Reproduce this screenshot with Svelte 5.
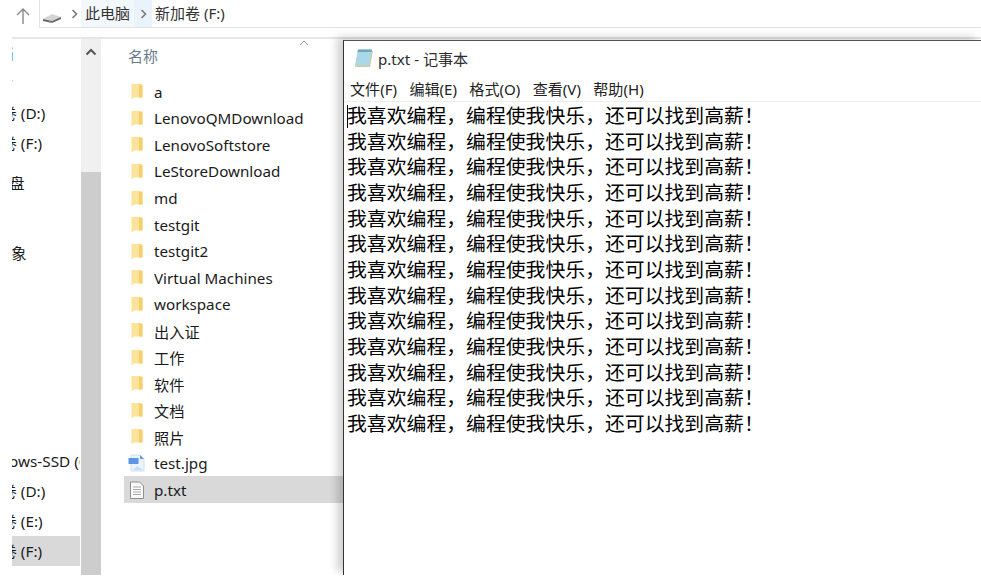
<script>
  const nav = [
    { t: '文档', x: -29, cls: 'r0' },
    { t: '图片', x: -29, cls: 'r0' },
    { t: '新加卷 (D:)', x: -41, cls: 'r0' },
    { t: '新加卷 (F:)', x: -41, cls: 'r0' },
    { t: 'U盘', x: -14, cls: 'r1' },
    { t: '3D 对象', x: -40, cls: 'r2' },
    { t: 'Windows-SSD (C:)', x: -40, cls: 'r3' },
    { t: '新加卷 (D:)', x: -41, cls: 'r0' },
    { t: '新加卷 (E:)', x: -41, cls: 'r0' },
    { t: '新加卷 (F:)', x: -41, cls: 'r0 sel' }
  ];
  const folders = ['a','LenovoQMDownload','LenovoSoftstore','LeStoreDownload','md','testgit','testgit2','Virtual Machines','workspace','出入证','工作','软件','文档','照片'];
  const menus = ['文件(F)','编辑(E)','格式(O)','查看(V)','帮助(H)'];
  const lines = Array(13).fill('我喜欢编程，编程使我快乐，还可以找到高薪！');
</script>

<div class="page">
  <header class="top">
    <svg class="up" width="16" height="18" viewBox="0 0 16 18"><path d="M8 17V2M2 8l6-6 6 6" fill="none" stroke="#8a8a8a" stroke-width="1.4"/></svg>
    <div class="crumbs">
      <svg class="drive" width="20" height="12" viewBox="0 0 20 12"><path d="M1 7l9-5 9 3-9 4z" fill="#d4d4d4"/><path d="M1 7l9 2 9-4v2l-9 4-9-2z" fill="#666"/><path d="M7 9.500l3 .5v1l-3-.5z" fill="#7fc48f"/></svg>
      <span class="sep"><svg width="7" height="10" viewBox="0 0 7 10"><path d="M1.500 1l4 4-4 4" fill="none" stroke="#7a7a7a" stroke-width="1.600"/></svg></span>
      <span class="crumb hl">此电脑</span>
      <span class="sep hl"><svg width="7" height="10" viewBox="0 0 7 10"><path d="M1.500 1l4 4-4 4" fill="none" stroke="#7a7a7a" stroke-width="1.600"/></svg></span>
      <span class="crumb">新加卷 (F:)</span>
    </div>
  </header>

  <main class="body">
    <nav class="nav">
      {#each nav as n}
        <div class="nrow {n.cls}"><span style="margin-left:{n.x}px">{n.t}</span></div>
      {/each}
    </nav>
    <div class="scroll">
      <svg width="12" height="8" viewBox="0 0 12 8"><path d="M1.500 6.500L6 2l4.500 4.500" fill="none" stroke="#555" stroke-width="2"/></svg>
      <div class="thumb"></div>
    </div>
    <section class="list">
      <div class="colhead">
        <span>名称</span>
        <svg class="sort" width="10" height="6" viewBox="0 0 10 6"><path d="M1 5l4-4 4 4" fill="none" stroke="#9a9a9a"/></svg>
      </div>
      {#each folders as f}
        <div class="row">
          <svg class="ficon" width="12" height="17" viewBox="0 0 12 17"><path d="M0.500 1h8l3 2v11.500H3l-2.500 2z" fill="#fbe39c"/><path d="M8 1.500h3.500v13H8z" fill="#f7cf6a"/></svg>
          <span>{f}</span>
        </div>
      {/each}
      <div class="row">
        <svg class="ficon jpg" width="18" height="18" viewBox="0 0 18 18"><path d="M3 1h9l4 4v12H3z" fill="#edf3fb" stroke="#cfdff3"/><path d="M12 1l4 4h-4z" fill="#5f9ae8"/><rect x="0.500" y="4" width="10" height="6" fill="#5b95e3"/><path d="M5 16l4-4 6 4z" fill="#c8dcf5"/></svg>
        <span>test.jpg</span>
      </div>
      <div class="row sel">
        <svg class="ficon jpg" width="18" height="18" viewBox="0 0 18 18"><path d="M2.500 1h9l4 4v12.500h-13z" fill="#fafafa" stroke="#8f8f8f"/><path d="M5 6h8M5 8.500h8M5 11h8M5 13.500h8" stroke="#a8a8a8"/></svg>
        <span>p.txt</span>
      </div>

      <div class="notepad">
        <div class="title">
          <svg width="20" height="20" viewBox="0 0 20 20"><path d="M4 3h15l-3 16H1z" fill="#d3c9a8"/><path d="M4 1.500h14l-3 16H1z" fill="#a9d8e8"/><path d="M4 1.500h14l-.5 2.500H3.500z" fill="#6ea6bf"/></svg>
          <span>p.txt - 记事本</span>
        </div>
        <div class="menu">
          {#each menus as m}<span>{m}</span>{/each}
        </div>
        <div class="text">
          {#each lines as l}<div>{l}</div>{/each}
          <i class="caret"></i>
        </div>
      </div>
    </section>
  </main>
</div>

<style>
  :global(body) { margin: 0; background: #fff; }
  .page {
    width: 981px; height: 586px; overflow: hidden; background: #fff;
    font-family: "Noto Sans", "Noto Sans CJK SC", sans-serif;
    color: #1a1a1a; font-size: 15px;
  }
  .top { height: 37px; margin-left: 12px; display: flex; align-items: flex-start; border-bottom: 2px solid #e6e6e6; box-sizing: content-box; }
  .up { margin: 7px 0 0 3px; }
  .crumbs {
    margin-left: 8px; flex: 1; height: 28px; display: flex; align-items: stretch;
    border: 1px solid #e3e3e3; border-top: 0; border-right: 0; box-sizing: border-box;
    color: #333;
  }
  .drive { margin: 12px 0 0 2px; }
  .sep { width: 13px; margin-left: 6px; display: flex; align-items: center; justify-content: center; }
  .crumb { display: flex; align-items: center; padding: 0 4px 2px; }
  .crumb.hl { background: #f3f8fd; }
  .sep.hl { margin-left: 0; width: 18px; background: #eaf3fb; }
  .crumb:last-child { padding-left: 3px; }

  .body { display: flex; height: 536px; margin-left: 12px; }
  .nav { width: 68px; flex: none; overflow: hidden; }
  .nrow { height: 30px; display: flex; align-items: center; white-space: nowrap; flex: none; font-size: 15.300px; box-sizing: border-box; }
  .nrow:first-child { margin-top: -1px; }
  .nrow span { flex: none; }
  .r0 { padding-bottom: 3px; }
  .r1, .r2 { padding-bottom: 2px; }
  .r1 { margin-top: 10px; }
  .r2 { margin-top: 40px; }
  .r3 { margin-top: 178px; }
  .nav .sel { background: #d9d9d9; }

  .scroll { width: 20px; margin-left: 1px; flex: none; background: #f0f0f0; display: flex; flex-direction: column; align-items: center; padding-top: 9px; box-sizing: border-box; }
  .thumb { margin-top: 116px; flex: 1; align-self: stretch; background: #cdcdcd; }
  .list { flex: 1; position: relative; padding-left: 23px; }
  .colhead { height: 39.700px; position: relative; color: #697a8c; padding: 7px 0 0 4px; font-size: 15px; line-height: 20px; box-sizing: border-box; }
  .sort { position: absolute; left: 175px; top: 1px; }
  .row { height: 26.530px; width: 219px; display: flex; align-items: center; padding-left: 7px; box-sizing: border-box; white-space: nowrap; font-size: 15.200px; }
  .ficon { margin-right: 11px; flex: none; }
  .jpg { margin-left: -3px; margin-right: 8px; }
  .row.sel { background: #d9d9d9; }

  .notepad {
    position: absolute; left: 242px; top: 1px; right: 0; bottom: 0;
    background: #fff; border-left: 1px solid #333; border-top: 1px solid #555;
    box-shadow: -6px -3px 8px rgba(0,0,0,.18);
    clip-path: inset(-20px 0 0 -40px);
  }
  .title { height: 34px; display: flex; align-items: center; gap: 4px; padding-left: 10px; font-size: 15.100px; color: #2b2b2b; }
  .menu { height: 26px; display: flex; gap: 12.300px; padding-left: 6px; align-items: center; font-size: 15.100px; border-bottom: 1px solid #eee; color: #222; }
  .text { position: relative; padding: 1px 0 0 3px; font-size: 19.850px; line-height: 25.670px; color: #000; white-space: nowrap; }
  .caret { position: absolute; left: 3px; top: 3px; width: 1px; height: 23px; background: #000; }
</style>
